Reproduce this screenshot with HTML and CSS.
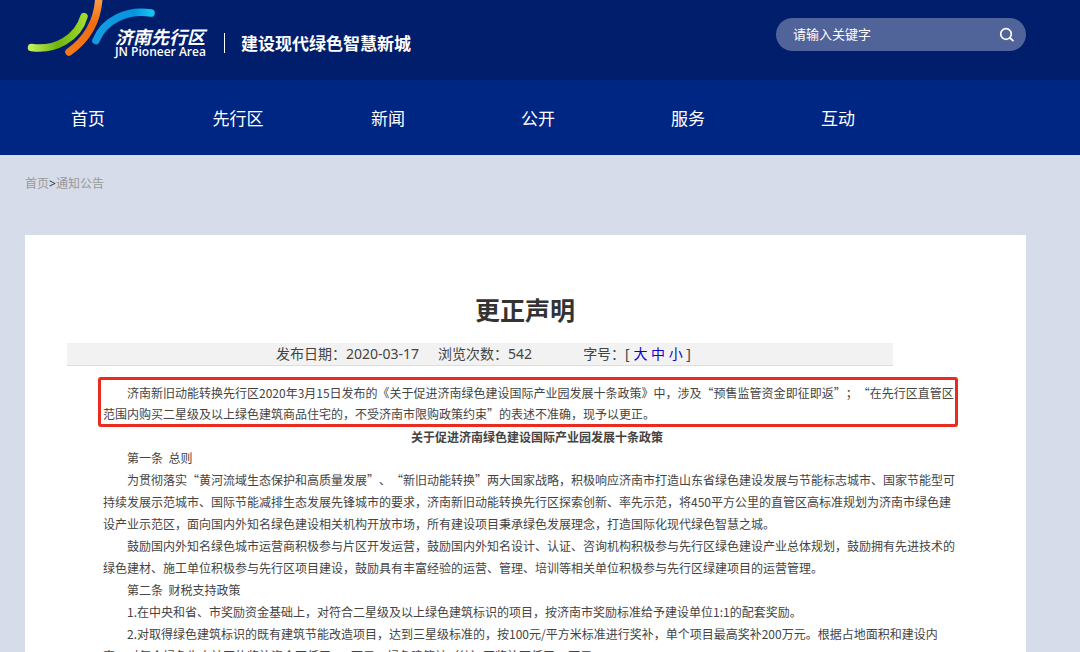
FILE: index.html
```html
<!DOCTYPE html>
<html lang="zh-CN">
<head>
<meta charset="utf-8">
<title>更正声明</title>
<link rel="stylesheet" href="styles.css">
</head>
<body>
<header class="top">
  <a class="brand" href="#">
    <svg class="brand-mark" viewBox="0 0 132 58" width="132" height="58" aria-hidden="true">
      <defs>
        <linearGradient id="green" x1="0" x2="1"><stop offset="0" stop-color="#c0ee5a"/><stop offset=".5" stop-color="#6fb40c"/><stop offset="1" stop-color="#a0da2c"/></linearGradient>
        <linearGradient id="orange" x1="0" y1="1" x2="0" y2="0"><stop offset="0" stop-color="#f3791b"/><stop offset=".5" stop-color="#ee6d10"/><stop offset="1" stop-color="#ffa04e"/></linearGradient>
        <linearGradient id="blue" x1="0" x2="1"><stop offset="0" stop-color="#139ce2"/><stop offset=".7" stop-color="#0795df"/><stop offset="1" stop-color="#12c5f0"/></linearGradient>
      </defs>
      <g fill="none" stroke-width="7.500" stroke-linecap="round">
        <path stroke="url(#green)" d="M7.500 47.500C31 51 54 38 60 16.500"/>
        <path stroke="url(#orange)" d="M45 52C62 40 74 22 75 -4"/>
        <path stroke="url(#blue)" d="M72 40.500C80 20 104 9 127 13"/>
      </g>
    </svg>
    <span class="brand-name">
      <span class="brand-cn">济南先行区</span>
      <span class="brand-en">JN Pioneer Area</span>
    </span>
    <span class="slogan">建设现代绿色智慧新城</span>
  </a>
  <form class="search">
    <input class="search-input" type="text" placeholder="请输入关键字" aria-label="请输入关键字">
    <button class="search-button" type="button" aria-label="搜索">
      <svg viewBox="0 0 16 16" width="16" height="16" aria-hidden="true"><circle cx="7" cy="7" r="5.300"/><path d="M11 11l3 2.700"/></svg>
    </button>
  </form>
</header>
<nav class="nav">
  <a href="#">首页</a>
  <a href="#">先行区</a>
  <a href="#">新闻</a>
  <a href="#">公开</a>
  <a href="#">服务</a>
  <a href="#">互动</a>
</nav>
<div class="crumbs"><a href="#">首页</a>&gt;<a href="#">通知公告</a></div>
<main class="card">
  <h1 class="title">更正声明</h1>
  <div class="meta">
    <span>发布日期：2020-03-17</span>
    <span>浏览次数：542</span>
    <span class="sizes">字号：[ <a href="#">大</a> <a href="#">中</a> <a href="#">小</a> ]</span>
  </div>
  <article class="article">
    <p class="notice">济南新旧动能转换先行区2020年3月15日发布的《关于促进济南绿色建设国际产业园发展十条政策》中，涉及“预售监管资金即征即返”；“在先行区直管区<br>范围内购买二星级及以上绿色建筑商品住宅的，不受济南市限购政策约束”的表述不准确，现予以更正。</p>
    <h2 class="subtitle">关于促进济南绿色建设国际产业园发展十条政策</h2>
    <p>第一条&nbsp; 总则</p>
    <p>为贯彻落实“黄河流域生态保护和高质量发展”、“新旧动能转换”两大国家战略，积极响应济南市打造山东省绿色建设发展与节能标志城市、国家节能型可<br>持续发展示范城市、国际节能减排生态发展先锋城市的要求，济南新旧动能转换先行区探索创新、率先示范，将450平方公里的直管区高标准规划为济南市绿色建<br>设产业示范区，面向国内外知名绿色建设相关机构开放市场，所有建设项目秉承绿色发展理念，打造国际化现代绿色智慧之城。</p>
    <p>鼓励国内外知名绿色城市运营商积极参与片区开发运营，鼓励国内外知名设计、认证、咨询机构积极参与先行区绿色建设产业总体规划，鼓励拥有先进技术的<br>绿色建材、施工单位积极参与先行区项目建设，鼓励具有丰富经验的运营、管理、培训等相关单位积极参与先行区绿建项目的运营管理。</p>
    <p>第二条&nbsp; 财税支持政策</p>
    <p>1.在中央和省、市奖励资金基础上，对符合二星级及以上绿色建筑标识的项目，按济南市奖励标准给予建设单位1:1的配套奖励。</p>
    <p>2.对取得绿色建筑标识的既有建筑节能改造项目，达到三星级标准的，按100元/平方米标准进行奖补，单个项目最高奖补200万元。根据占地面积和建设内<br>容，对每个绿色生态社区的奖补资金不低于400万元，绿色建筑社（待）区奖补不低于20万元。</p>
  </article>
</main>
</body>
</html>
```
FILE: styles.css
```css
* {
  box-sizing: border-box;
}

body {
  height: 100vh;
  margin: 0;
  overflow: hidden;
  background: #d6dcea;
  color: #444;
  font-family: "Noto Sans CJK SC", sans-serif;
  font-size: 12px;
}

a {
  color: inherit;
  text-decoration: none;
}

.top {
  display: flex;
  justify-content: space-between;
  align-items: flex-start;
  height: 80px;
  padding: 0 54px 0 24px;
  background: #001e6b;
  color: #fff;
}

.brand {
  display: flex;
}

.brand-mark {
  flex: none;
}

.brand-name {
  display: flex;
  flex-direction: column;
  width: 91px;
  margin: 27px 18px 0 -41px;
  white-space: nowrap;
}

.brand-cn {
  font-size: 18px;
  font-style: italic;
  font-weight: 700;
  line-height: 19px;
}

.brand-en {
  font-family: "Open Sans", sans-serif;
  font-size: 12px;
  font-weight: 600;
  line-height: 12px;
}

.slogan {
  height: 20px;
  margin-top: 33px;
  padding-left: 16px;
  border-left: 1px solid #fff;
  font-size: 17px;
  font-weight: 700;
  line-height: 20px;
}

.search {
  display: flex;
  align-items: center;
  width: 250px;
  height: 33px;
  margin-top: 18px;
  padding: 0 11px 0 17px;
  border-radius: 17px;
  background: #50649a;
}

.search-input {
  flex: 1;
  min-width: 0;
  padding: 0 0 2px;
  border: 0;
  outline: 0;
  background: none;
  color: #fff;
  font: 13px "Noto Sans CJK SC", sans-serif;
}

.search-input::placeholder {
  color: #fff;
  opacity: 1;
}

.search-button {
  display: flex;
  padding: 0;
  border: 0;
  background: none;
}

.search-button svg {
  fill: none;
  stroke: #fff;
  stroke-width: 1.7;
  stroke-linecap: round;
}

.nav {
  display: flex;
  height: 75px;
  padding-left: 13px;
  background: #002684;
  color: #fff;
  font-size: 17px;
  line-height: 76px;
}

.nav a {
  width: 150px;
  text-align: center;
}

.crumbs {
  padding: 19px 25px 0;
  color: #333;
  font-family: "Noto Sans", "Noto Sans CJK SC", sans-serif;
  line-height: 20px;
}

.crumbs a {
  color: #999;
}

.card {
  margin: 41px 54px 0 25px;
  padding: 54px 42px;
  background: #fff;
}

.title {
  margin: 0;
  padding-right: 1px;
  color: #333;
  font-size: 25px;
  line-height: 40px;
  text-align: center;
}

.meta {
  display: flex;
  gap: 19px;
  height: 23px;
  margin: 14px 91px 0 0;
  padding-left: 209px;
  border-bottom: 1px solid #ddd;
  background: #f2f2f2;
  font-family: "Noto Sans", "Noto Sans CJK SC", sans-serif;
  font-size: 14px;
  line-height: 22px;
  white-space: nowrap;
}

.sizes {
  padding-left: 32px;
}

.sizes a {
  color: #10c;
}

.article {
  margin: 11px 26px 0 31px;
  line-height: 22px;
  white-space: nowrap;
  text-spacing-trim: space-all;
}

.article p {
  margin: 0;
  padding: 0 5px;
  text-indent: 2em;
}

.article .notice {
  padding: 2px 2px 0;
  border: 3px solid #eb2a20;
  border-radius: 3px;
  line-height: 21px;
}

.subtitle {
  margin: 0;
  padding-left: 18px;
  font-size: 12px;
  line-height: 20px;
  text-align: center;
}
```
